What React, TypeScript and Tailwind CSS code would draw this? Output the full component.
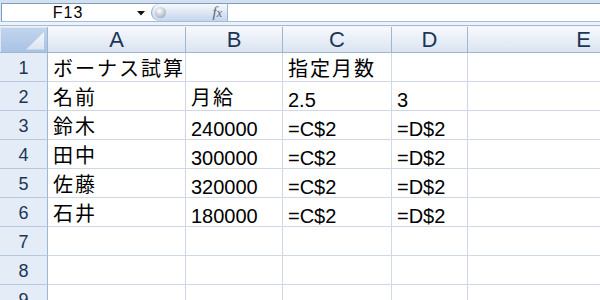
import React from "react";

const cols = ["A", "B", "C", "D", "E"];
const data: string[][] = [
  ["ボーナス試算", "", "指定月数", "", ""],
  ["名前", "月給", "2.5", "3", ""],
  ["鈴木", "240000", "=C$2", "=D$2", ""],
  ["田中", "300000", "=C$2", "=D$2", ""],
  ["佐藤", "320000", "=C$2", "=D$2", ""],
  ["石井", "180000", "=C$2", "=D$2", ""],
  ["", "", "", "", ""],
  ["", "", "", "", ""],
  ["", "", "", "", ""],
];

const isJa = (s: string) => /[\u3000-\u9fff\uff00-\uffef]/.test(s);

export default function App() {
  return (
    <div
      className="w-[600px] h-[300px] overflow-hidden bg-white"
      style={{ fontFamily: '"Liberation Sans", "Noto Sans CJK JP", sans-serif' }}
    >
      {/* formula bar area */}
      <div className="h-[27px] bg-[#dbe6f3] flex flex-col">
        <div className="h-[3px] bg-[#d3e0f0]" />
        <div className="h-[19px] flex ml-[1px] border-l border-t border-b border-l-[#7f9cc2] border-t-[#7f9cc2] border-b-[#a5bcd8] bg-white">
          <div className="w-[149px] flex items-center relative">
            <div className="w-[132px] text-center text-[16px] leading-[17px] text-black tracking-[1px]">F13</div>
            <svg className="absolute left-[135px] top-[7px]" width="8" height="5" viewBox="0 0 8 5">
              <path d="M0 0 H8 L4 4.5 Z" fill="#111" />
            </svg>
          </div>
          <div className="w-[77px] h-[17px] relative rounded-l-[9px] border-l border-[#8ea9cc] bg-gradient-to-b from-[#f6f9fd] via-[#dde7f4] to-[#c5d5eb] border-r border-r-[#9db4d2]">
            <div
              className="absolute left-[3px] top-[3px] w-[11px] h-[11px] rounded-full"
              style={{ background: "radial-gradient(circle at 40% 35%, #ffffff 0%, #d6dbe1 35%, #8f99a4 100%)" }}
            />
            <span
              className="absolute right-[5px] top-[0px] text-[15px] leading-[17px] italic text-[#5c6673]"
              style={{ fontFamily: '"Liberation Serif", serif' }}
            >
              f<span className="text-[12px]">x</span>
            </span>
          </div>
          <div className="flex-1 bg-white" />
        </div>
        <div className="h-[3px] bg-[#edf2f9]" />
        <div className="h-[1px] bg-[#a5bcd8]" />
        <div className="h-[1px] bg-[#eef3f9]" />
      </div>

      {/* grid */}
      <div className="w-[700px] grid grid-cols-[48px_138px_97px_109px_76px_232px] auto-rows-[29px] grid-rows-[26px]">
        {/* corner */}
        <div className="relative h-[26px] border-r border-b border-[#9eb6ce] bg-gradient-to-b from-[#c2d5ee] to-[#a9c3e6] shadow-[inset_1px_1px_0_#dfe9f6]">
          <svg className="absolute left-[26px] top-[5px]" width="19" height="18" viewBox="0 0 19 18">
            <defs>
              <linearGradient id="tri" x1="0" y1="0" x2="0" y2="1">
                <stop offset="0" stopColor="#f4f7fb" />
                <stop offset="1" stopColor="#dbe5f2" />
              </linearGradient>
            </defs>
            <path d="M0 17.5 L18 0 V17.5 Z" fill="url(#tri)" />
          </svg>
        </div>
        {cols.map((c) => (
          <div
            key={c}
            className="h-[26px] border-r border-b border-[#9eb6ce] bg-gradient-to-b from-[#f7f9fd] to-[#dae4f1] flex items-center justify-center text-[22px] leading-[22px] text-[#1b3656]"
          >
            {c}
          </div>
        ))}

        {data.map((row, ri) => (
          <React.Fragment key={ri}>
            <div className="h-[29px] bg-[#e4ecf7] border-r border-r-[#9eb6ce] border-b border-b-[#b5c8de] flex items-end justify-center text-[18px] leading-[19px] pb-[3px] text-[#1b3656]">
              {ri + 1}
            </div>
            {row.map((v, ci) => (
              <div
                key={ci}
                className={
                  "h-[29px] border-r border-b border-[#d0d7e5] flex items-end pl-[5px] text-[20px] leading-[20px] text-black whitespace-nowrap " +
                  (isJa(v) ? "tracking-[2px] pb-[2px]" : "")
                }
              >
                {v}
              </div>
            ))}
          </React.Fragment>
        ))}
      </div>
    </div>
  );
}
